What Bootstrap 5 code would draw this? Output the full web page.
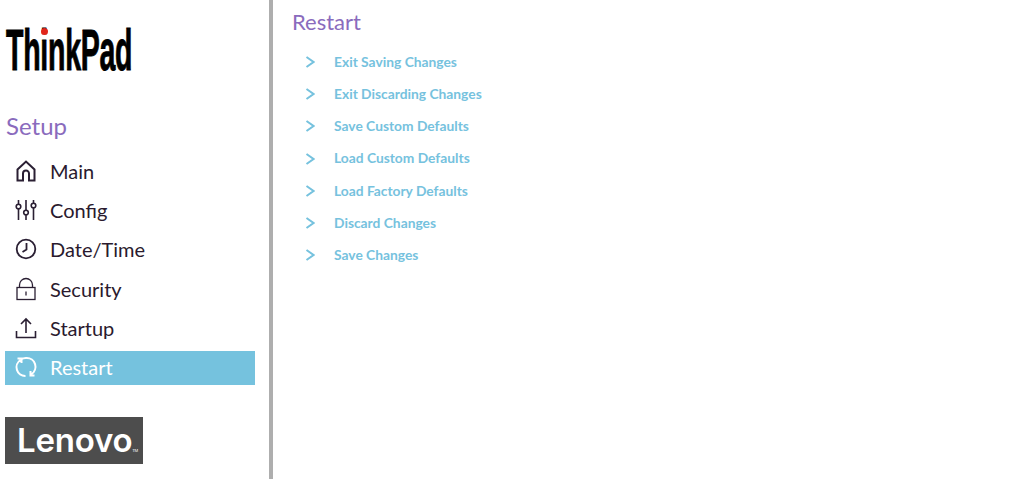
<!DOCTYPE html>
<html lang="en">
<head>
    <meta charset="UTF-8">
    <title>Setup - Restart</title>
    <link href="https://cdn.jsdelivr.net/npm/bootstrap@5.3.3/dist/css/bootstrap.min.css" rel="stylesheet">
    <style>
        body { font-family: Lato, "Open Sans", sans-serif; background: #fff; overflow: hidden; }
        .page-wrap { height: 479px; }
        .side-panel { width: 273px; height: 479px; border-right: 4px solid #aeaeae; padding: 29px 14px 0 5px; flex: none; }
        .tp-logo { height: 42px; margin-left: 1px; position: relative; width: 126px; }
        .tp-word { font-family: "Liberation Sans", sans-serif; font-weight: 700; font-size: 57px; line-height: 42px; color: #000; display: block; transform: scaleX(.5); transform-origin: left center; letter-spacing: -.5px; white-space: nowrap; -webkit-text-stroke: 1px #000; }
        .tp-dot { position: absolute; left: 34.5px; top: -1px; width: 7px; height: 7px; border-radius: 50%; background: #e1251b; }
        .setup-title { color: #8a6bbd; font-size: 24px; font-weight: 400; line-height: 30px; margin: 40px 0 14px 1px; }
        .side-item { height: 34px; margin-bottom: 5.2px; padding: 0 0 2px 10px; gap: 13px; font-size: 20px; color: #2a1a2e; }
        .side-item svg { width: 22px; height: 22px; flex: none; stroke: #2a1f33; fill: none; stroke-width: 1.6; overflow: visible; }
        .side-item.is-active { background: #75c2de; color: #fff; }
        .side-item.is-active svg { stroke: #fff; stroke-width: 2; }
        .lenovo-box { width: 138px; height: 47px; background: #4d4d4d; color: #fff; font-family: Inter, "Liberation Sans", sans-serif; font-weight: 600; font-size: 33px; line-height: 47px; margin-top: 32px; padding-left: 12px; letter-spacing: -.2px; position: relative; }
        .lenovo-box sup { position: absolute; font-size: 4px; font-weight: 400; right: 5px; top: 10px; line-height: 47px; }
        .main-panel { padding: 9px 0 0 19px; }
        .page-title { color: #8a6bbd; font-size: 22px; font-weight: 400; line-height: 26px; margin: 0 0 11px; }
        .opt-row { height: 32.2px; color: #76c2de; font-size: 13.8px; font-weight: 700; padding-left: 13px; gap: 19px; }
        .opt-row svg { width: 10px; height: 12px; stroke: #76c2de; fill: none; stroke-width: 2; flex: none; }
    </style>
</head>
<body>
<div class="page-wrap d-flex">
    <div class="side-panel">
        <div class="tp-logo">
            <span class="tp-word">ThinkPad</span>
            <span class="tp-dot"></span>
        </div>
        <div class="setup-title">Setup</div>

        <div class="side-item d-flex align-items-center">
            <svg viewBox="0 0 22 22"><path d="M2.500 20.500V9.500L11 1.500l8.500 8v11h-5.500v-7a3 3 0 0 0-6 0v7z" stroke-width="2"/></svg>
            <span>Main</span>
        </div>
        <div class="side-item d-flex align-items-center">
            <svg viewBox="0 0 22 22"><path d="M3.500 1v4M3.500 10v11M11 1v10M11 16v5M18.500 1v3M18.500 9v12"/><circle cx="3.500" cy="7.500" r="2.300"/><circle cx="11" cy="13.500" r="2.300"/><circle cx="18.500" cy="6.500" r="2.300"/></svg>
            <span>Config</span>
        </div>
        <div class="side-item d-flex align-items-center">
            <svg viewBox="0 0 22 22"><circle cx="11" cy="11" r="9.300" stroke-width="1.800"/><path d="M11.500 5v6.500L7.500 14" stroke-width="1.800"/></svg>
            <span>Date/Time</span>
        </div>
        <div class="side-item d-flex align-items-center">
            <svg viewBox="0 0 22 22"><rect x="2" y="9.500" width="18" height="12" stroke-width="1.300"/><path d="M4.500 9.500V7a6.500 6.500 0 0 1 13 0v2.500" stroke-width="1.300"/><path d="M11 13.500v4" stroke-width="1.300"/></svg>
            <span>Security</span>
        </div>
        <div class="side-item d-flex align-items-center">
            <svg viewBox="0 0 22 22"><path d="M1.500 14v6.500h19V14M11 16V2M6 7l5-5 5 5"/></svg>
            <span>Startup</span>
        </div>
        <div class="side-item is-active d-flex align-items-center">
            <svg viewBox="0 0 22 22"><path d="M10.500 20A8.700 8.700 0 0 1 5.500 4M2.500 2.500h4v4.500M6 3.500A8.700 8.700 0 0 1 11.500 2M11.500 2A8.700 8.700 0 0 1 16.500 18M19.500 19.500h-4V15"/></svg>
            <span>Restart</span>
        </div>

        <div class="lenovo-box">Lenovo<sup>TM</sup></div>
    </div>

    <div class="main-panel flex-grow-1">
        <div class="page-title">Restart</div>
        <div class="opt-row d-flex align-items-center"><svg viewBox="0 0 10 12"><path d="M1.500 1l7 5-7 5"/></svg><span>Exit Saving Changes</span></div>
        <div class="opt-row d-flex align-items-center"><svg viewBox="0 0 10 12"><path d="M1.500 1l7 5-7 5"/></svg><span>Exit Discarding Changes</span></div>
        <div class="opt-row d-flex align-items-center"><svg viewBox="0 0 10 12"><path d="M1.500 1l7 5-7 5"/></svg><span>Save Custom Defaults</span></div>
        <div class="opt-row d-flex align-items-center"><svg viewBox="0 0 10 12"><path d="M1.500 1l7 5-7 5"/></svg><span>Load Custom Defaults</span></div>
        <div class="opt-row d-flex align-items-center"><svg viewBox="0 0 10 12"><path d="M1.500 1l7 5-7 5"/></svg><span>Load Factory Defaults</span></div>
        <div class="opt-row d-flex align-items-center"><svg viewBox="0 0 10 12"><path d="M1.500 1l7 5-7 5"/></svg><span>Discard Changes</span></div>
        <div class="opt-row d-flex align-items-center"><svg viewBox="0 0 10 12"><path d="M1.500 1l7 5-7 5"/></svg><span>Save Changes</span></div>
    </div>
</div>
<script src="https://cdn.jsdelivr.net/npm/bootstrap@5.3.3/dist/js/bootstrap.bundle.min.js"></script>
</body>
</html>
